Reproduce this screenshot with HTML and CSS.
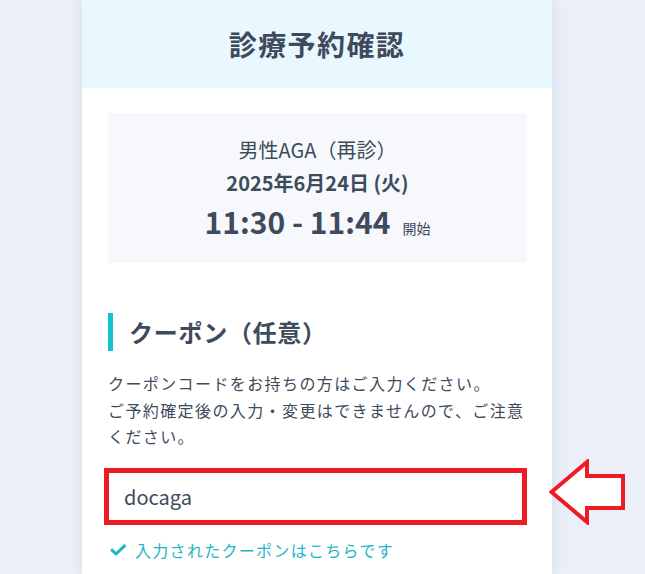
FILE: index.html
```html
<!DOCTYPE html>
<html lang="ja">
<head>
<meta charset="utf-8">
<title>診療予約確認</title>
<link rel="stylesheet" href="styles.css">
</head>
<body>
<div class="page">
  <main class="card">
    <header class="card-header">
      <h1 class="title">診療予約確認</h1>
    </header>
    <div class="card-body">
      <section class="summary">
        <p class="summary-menu">男性AGA（再診）</p>
        <p class="summary-date">2025年6月24日 (火)</p>
        <p class="summary-time">11:30 - 11:44<span class="summary-start">開始</span></p>
      </section>

      <section class="coupon">
        <h2 class="section-title">クーポン（任意）</h2>
        <p class="coupon-desc">クーポンコードをお持ちの方はご入力ください。<br>ご予約確定後の入力・変更はできませんので、ご注意ください。</p>
        <div class="coupon-input">docaga</div>
        <p class="coupon-note">
          <svg class="check" viewBox="0 0 16 12" width="16" height="12"><path d="M2 6.2 L6 10 L14.5 1.8" fill="none" stroke="currentColor" stroke-width="3" stroke-linecap="round" stroke-linejoin="round"/></svg>
          入力されたクーポンはこちらです
        </p>
      </section>
    </div>
  </main>
  <svg class="arrow" viewBox="549 459 78 66" width="78" height="66">
    <polygon points="551.5,492 587,462 587,476 623,476 623,508 587,508 587,522" fill="#ffffff" stroke="#ed1c24" stroke-width="4" stroke-linejoin="miter"/>
  </svg>
</div>
</body>
</html>
```

FILE: styles.css
```css
* { box-sizing: border-box; }
html, body { margin: 0; padding: 0; }
body {
  background: #ebf0f8;
  font-family: "Noto Sans CJK JP", "Noto Sans", sans-serif;
  color: #3d4b5c;
}
.page {
  position: relative;
  min-height: 574px;
}
.card {
  width: 470px;
  margin-left: 82px;
  min-height: 574px;
  background: #ffffff;
  box-shadow: 0 0 14px rgba(150, 165, 190, 0.28);
}
.card-header {
  height: 88px;
  background: #e9f8ff;
  display: flex;
  align-items: center;
  justify-content: center;
}
.title {
  margin: 0;
  font-size: 28px;
  font-weight: 700;
  letter-spacing: 0.05em;
  line-height: 1;
  color: #3d4b5c;
}
.card-body {
  padding: 25px 25px 0 26px;
}
.summary {
  background: #f6f8fc;
  padding: 19.5px 0;
  text-align: center;
}
.summary p { margin: 0; }
.summary-menu {
  font-size: 20px;
  line-height: 33px;
}
.summary-date {
  font-size: 20px;
  font-weight: 700;
  line-height: 33px;
}
.summary-time {
  font-size: 30px;
  font-weight: 700;
  line-height: 45px;
}
.summary-start {
  font-size: 14px;
  font-weight: 400;
  line-height: 1;
  margin-left: 12px;
}
.coupon {
  margin-top: 50px;
}
.section-title {
  margin: 0;
  border-left: 5px solid #14c3d0;
  padding-left: 16px;
  font-size: 24px;
  font-weight: 700;
  line-height: 38px;
  letter-spacing: 0.03em;
}
.coupon-desc {
  margin: 19px 0 0;
  font-size: 16px;
  line-height: 26.5px;
  letter-spacing: 1.4px;
}
.coupon-input {
  margin: 18px 0 0 -4px;
  height: 57px;
  border: 5px solid #ed1c24;
  background: #fff;
  display: flex;
  align-items: center;
  padding-left: 15px;
  font-size: 20px;
  color: #3d4b5c;
}
.coupon-note {
  margin: 12px 0 0 2px;
  display: flex;
  align-items: center;
  gap: 9px;
  font-size: 16px;
  line-height: 26px;
  letter-spacing: 1.3px;
  color: #1cb6c6;
}
.check { flex: none; }
.arrow {
  position: absolute;
  left: 549px;
  top: 459px;
}
```
